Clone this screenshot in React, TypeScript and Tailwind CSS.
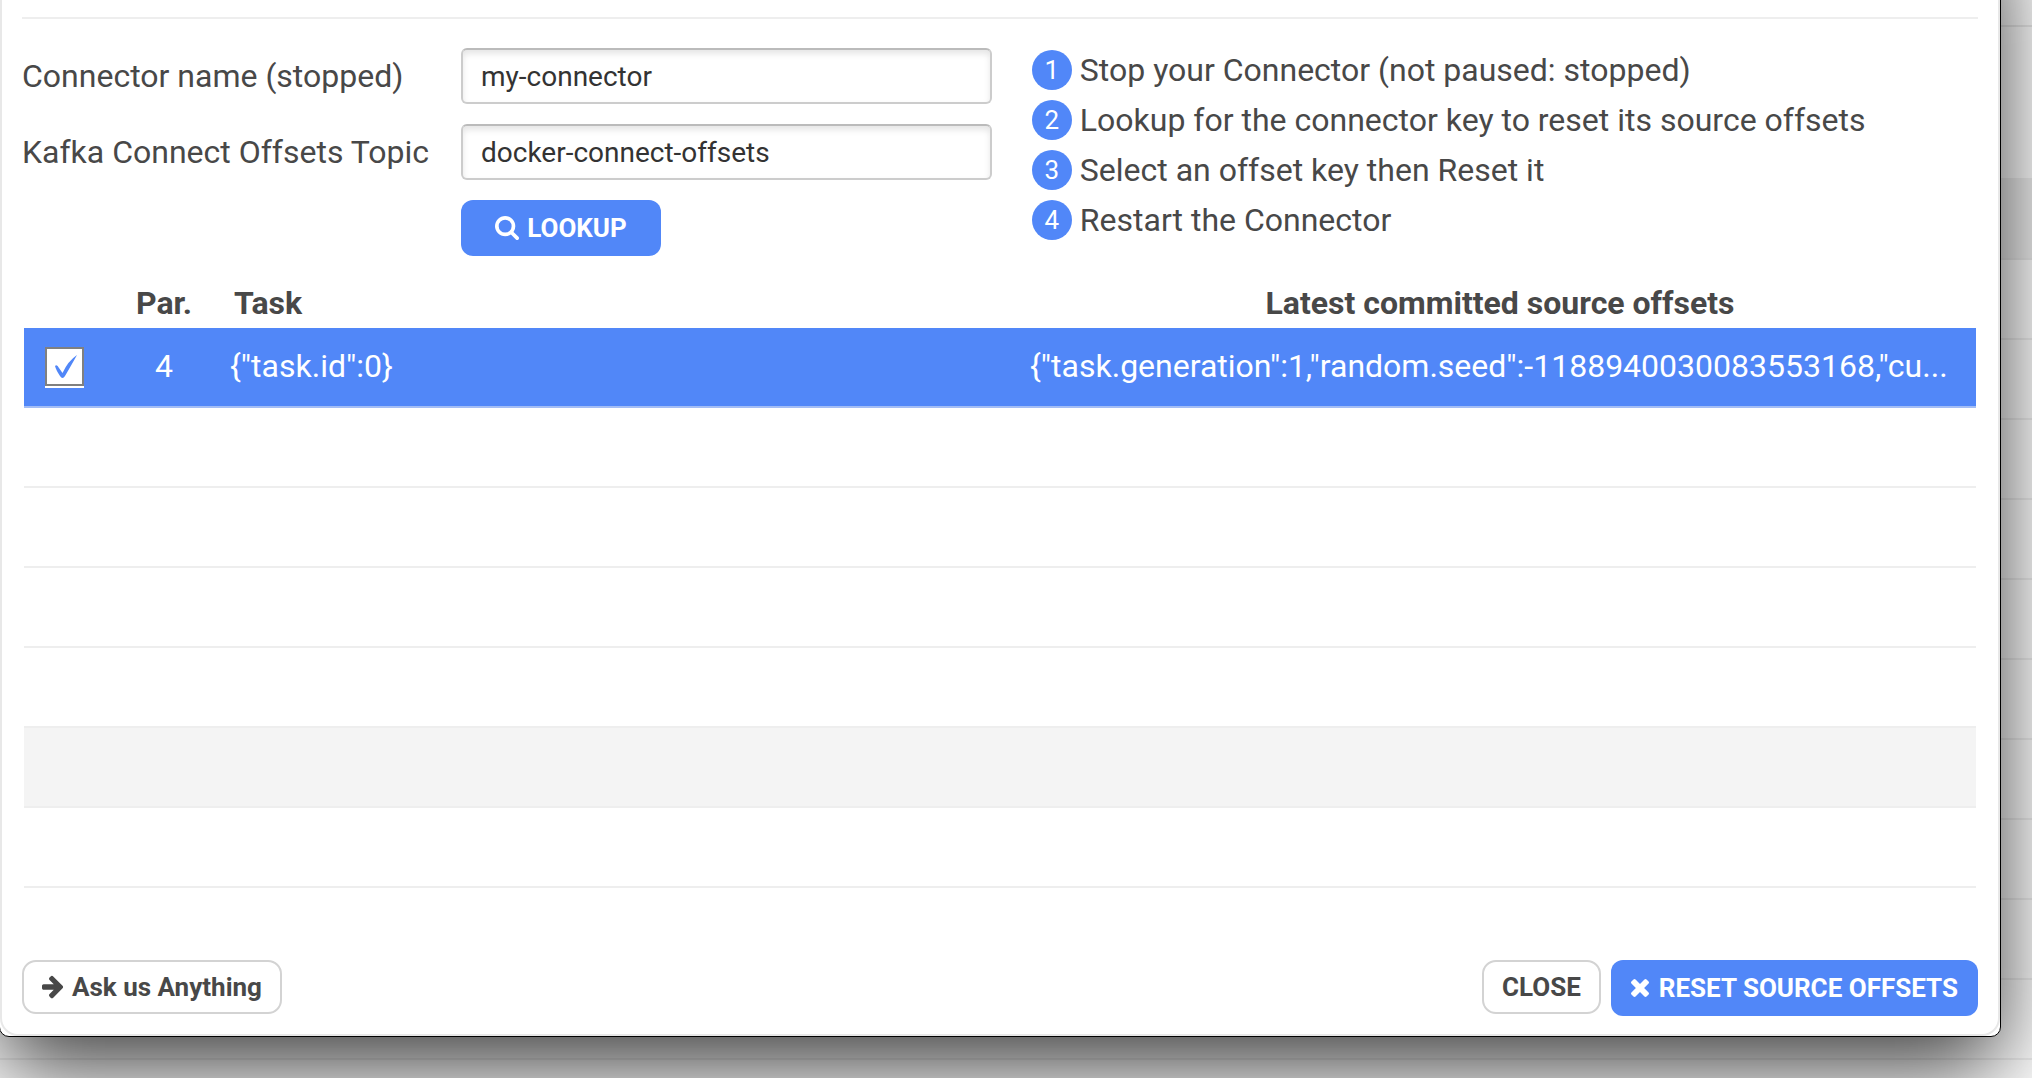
import React from "react"

const steps = [
  "Stop your Connector (not paused: stopped)",
  "Lookup for the connector key to reset its source offsets",
  "Select an offset key then Reset it",
  "Restart the Connector",
]

const emptyRows = ["bg-white", "bg-white", "bg-white", "bg-white", "bg-[#f4f4f4]", "bg-white"]

function SearchIcon() {
  return (
    <svg viewBox="64 128 1664 1664" fill="currentColor" className="size-6">
      <path d="M1216 832q0-185-131.5-316.5t-316.5-131.5-316.5 131.5-131.5 316.5 131.5 316.5 316.5 131.5 316.5-131.5 131.5-316.5zm512 832q0 52-38 90t-90 38q-54 0-90-38l-343-342q-179 124-399 124-143 0-273.5-55.5t-225-150-150-225-55.5-273.5 55.5-273.5 150-225 225-150 273.5-55.5 273.5 55.5 225 150 150 225 55.500 273.5q0 220-124 399l343 343q37 37 37 90z" />
    </svg>
  )
}

function ArrowRightIcon() {
  return (
    <svg viewBox="128 128 1536 1664" fill="currentColor" className="h-6 w-[22px]">
      <path d="M1600 960q0 54-37 91l-651 651q-39 37-91 37-51 0-90-37l-75-75q-38-38-38-91t38-91l293-293h-704q-52 0-84.5-37.5t-32.5-90.5v-128q0-53 32.5-90.5t84.5-37.5h704l-293-294q-38-36-38-90t38-90l75-75q38-38 90-38 53 0 91 38l651 651q37 35 37 90z" />
    </svg>
  )
}

function TimesIcon() {
  return (
    <svg viewBox="302 366 1188 1188" fill="currentColor" className="size-[18px]">
      <path d="M1490 1322q0 40-28 68l-136 136q-28 28-68 28t-68-28l-294-294-294 294q-28 28-68 28t-68-28l-136-136q-28-28-28-68t28-68l294-294-294-294q-28-28-28-68t28-68l136-136q28-28 68-28t68 28l294 294 294-294q28-28 68-28t68 28l136 136q28 28 28 68t-28 68l-294 294 294 294q28 28 28 68z" />
    </svg>
  )
}

function PageBehind() {
  return (
    <div aria-hidden="true" className="[grid-area:1/1]">
      <div className="h-[27px] border-b-2 border-[#ebebeb]" />
      <div className="h-[151px]" />
      <div className="h-[82px] border-b-2 border-[#ebebeb] bg-[#f0f0f0]" />
      {Array.from({ length: 10 }, (_, i) => (
        <div key={i} className="h-20 border-b-2 border-[#f0f0f0]" />
      ))}
    </div>
  )
}

function Field({ id, label, value }: { id: string; label: string; value: string }) {
  return (
    <>
      <label htmlFor={id}>{label}</label>
      <input
        id={id}
        type="text"
        defaultValue={value}
        className="h-14 w-full rounded-md border-2 border-[#ccc] border-t-[#bbb] bg-white px-[18px] text-[28px] text-[#333] shadow-[inset_0_4px_6px_rgba(0,0,0,0.1)]"
      />
    </>
  )
}

export default function App() {
  return (
    <main className="grid max-h-screen min-h-screen items-start overflow-hidden bg-white font-[Roboto,sans-serif] text-[32px] leading-10 text-[#484848]">
      <PageBehind />

      <section className="z-10 -mt-[88px] mr-[31px] -ml-px rounded-[10px] border border-black bg-white shadow-[0_32px_88px_rgba(0,0,0,0.75)] [grid-area:1/1]">
        <div className="rounded-[18px] border-2 border-[#e8e8e8] px-5 pt-[102px] pb-[18px]">
          <div className="border-t-2 border-[#eee] pt-[29px]">
            <div className="grid grid-cols-[41fr_40fr] items-start gap-10">
              <div className="grid grid-cols-[419px_1fr] items-center gap-5">
                <Field id="connector" label="Connector name (stopped)" value="my-connector" />
                <Field id="topic" label="Kafka Connect Offsets Topic" value="docker-connect-offsets" />
                <button
                  type="button"
                  className="col-start-2 flex h-14 w-[200px] items-center justify-center gap-2 rounded-xl bg-[#5187f8] text-[26px] font-bold text-white"
                >
                  <SearchIcon />
                  LOOKUP
                </button>
              </div>

              <ol className="flex flex-col gap-[10px] pt-[2px]">
                {steps.map((step, i) => (
                  <li key={step} className="flex items-center gap-2">
                    <span className="flex size-10 items-center justify-center rounded-full bg-[#5187f8] text-[26px] text-white">
                      {i + 1}
                    </span>
                    {step}
                  </li>
                ))}
              </ol>
            </div>

            <div className="px-[2px] pt-6">
              <table className="w-full table-fixed border-separate border-spacing-0">
                <colgroup>
                  <col className="w-20" />
                  <col className="w-[120px]" />
                  <col className="w-[800px]" />
                  <col />
                </colgroup>
                <thead>
                  <tr className="h-12">
                    <td />
                    <th className="pb-[2px] text-center">Par.</th>
                    <th className="px-[10px] pb-[2px] text-left">Task</th>
                    <th className="pb-[2px] text-center">Latest committed source offsets</th>
                  </tr>
                </thead>
                <tbody>
                  <tr className="h-20 bg-[#5187f8] text-white *:border-b-2 *:border-[#a3bdf5] *:pb-[2px]">
                    <td>
                      <label className="relative mx-auto flex size-10 items-center justify-center">
                        <input
                          type="checkbox"
                          defaultChecked
                          aria-label="Select task 0"
                          className="size-[39px] appearance-none border-2 border-[#808080] bg-white shadow-[0_2px_0_#fff]"
                        />
                        <svg viewBox="-2 -1 22 24" className="pointer-events-none absolute h-6 w-[22px] overflow-visible">
                          <path
                            d="M0 11Q2 9 4 13L7.500 18Q13 6 22 0Q17 9 10 21Q7.500 25 5 21Q1 15 0 11Z"
                            fill="#5187f8"
                          />
                        </svg>
                      </label>
                    </td>
                    <td className="text-center">4</td>
                    <td className="px-[6px]">{'{"task.id":0}'}</td>
                    <td className="px-[6px] whitespace-nowrap">
                      {'{"task.generation":1,"random.seed":-1188940030083553168,"cu...'}
                    </td>
                  </tr>
                  {emptyRows.map((bg, i) => (
                    <tr key={i} className={`h-20 ${bg}`}>
                      <td colSpan={4} className="border-b-2 border-[#eee]" />
                    </tr>
                  ))}
                </tbody>
              </table>
            </div>

            <footer className="flex items-start gap-[10px] pt-[72px] text-[26px]">
              <button
                type="button"
                className="mr-auto flex h-[54px] items-center gap-2 rounded-[14px] border-2 border-[#d3d3d3] px-[18px] font-bold"
              >
                <ArrowRightIcon />
                Ask us Anything
              </button>
              <button
                type="button"
                className="h-[54px] rounded-[14px] border-2 border-[#d3d3d3] px-[18px] font-bold"
              >
                CLOSE
              </button>
              <button
                type="button"
                className="flex h-14 items-center gap-[10px] rounded-xl bg-[#5187f8] px-5 font-bold text-white"
              >
                <TimesIcon />
                RESET SOURCE OFFSETS
              </button>
            </footer>
          </div>
        </div>
      </section>
    </main>
  )
}
